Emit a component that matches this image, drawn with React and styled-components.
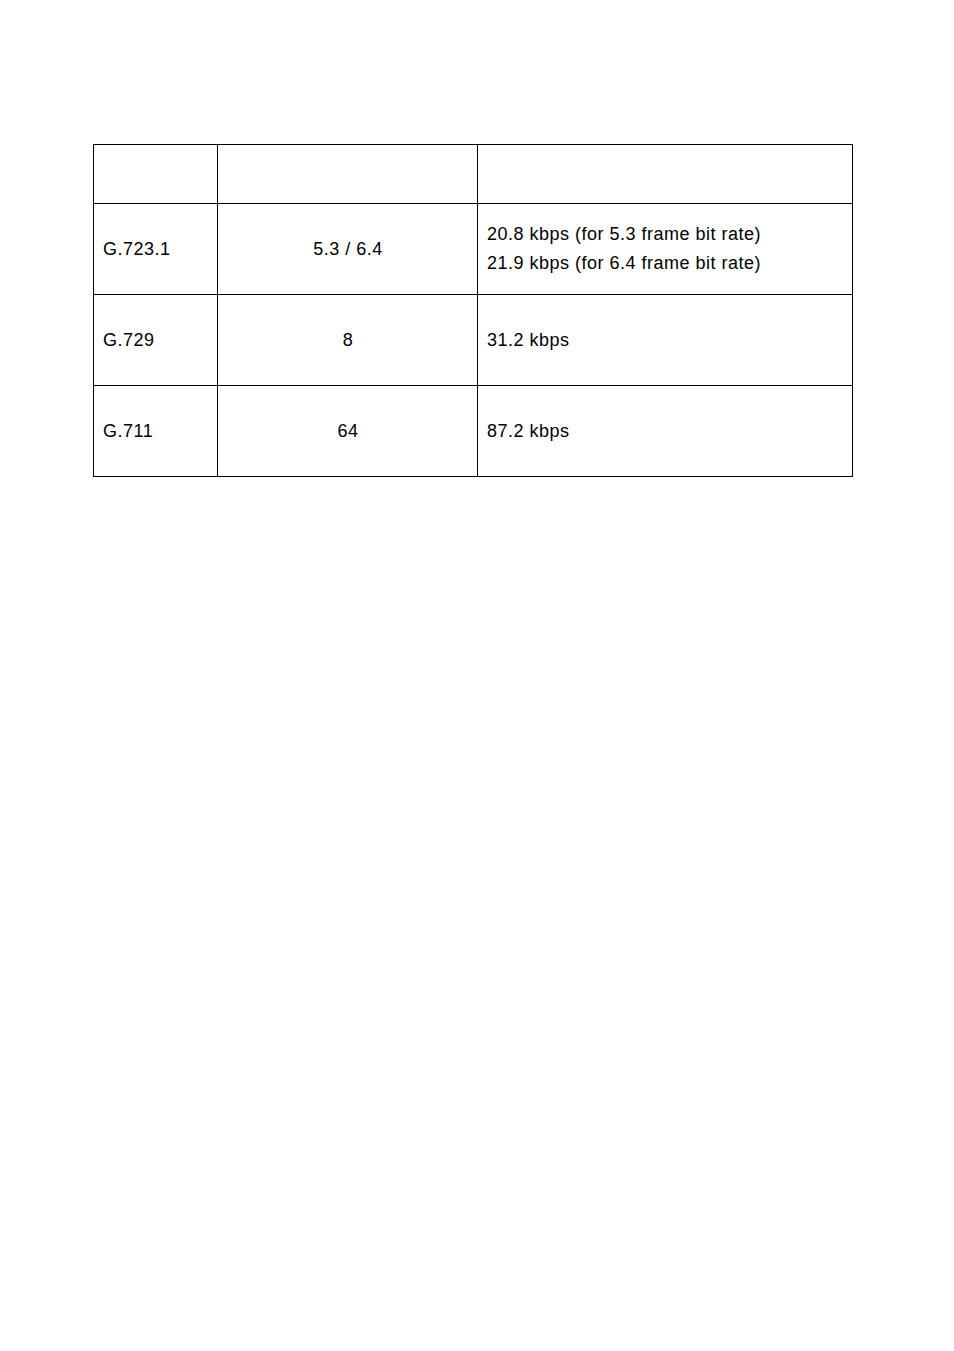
import React from 'react';
import styled, { createGlobalStyle } from 'styled-components';

const GlobalStyle = createGlobalStyle`
  body {
    margin: 0;
    background: #fff;
    font-family: 'Liberation Sans', Arial, sans-serif;
    color: #000;
  }
`;

const Page = styled.div`
  width: 954px;
  min-height: 1351px;
  padding: 144px 0 0 93px;
  box-sizing: border-box;
`;

const Table = styled.table`
  border-collapse: collapse;
  table-layout: fixed;
  width: 759px;
`;

const Row = styled.tr`
  height: ${(p) => (p.$header ? '59px' : '91px')};
`;

const Cell = styled.td`
  border: 1px solid #000;
  padding: 0 8px 0 9px;
  font-size: 18px;
  letter-spacing: 0.5px;
  line-height: 29px;
  vertical-align: middle;
  text-align: ${(p) => (p.$center ? 'center' : 'left')};
  box-sizing: border-box;
`;

const rows = [
  { codec: 'G.723.1', rate: '5.3 / 6.4', bw: ['20.8 kbps (for 5.3 frame bit rate)', '21.9 kbps (for 6.4 frame bit rate)'] },
  { codec: 'G.729', rate: '8', bw: ['31.2 kbps'] },
  { codec: 'G.711', rate: '64', bw: ['87.2 kbps'] },
];

export default function App() {
  return (
    <>
      <GlobalStyle />
      <Page>
        <Table>
          <colgroup>
            <col style={{ width: 124 }} />
            <col style={{ width: 260 }} />
            <col style={{ width: 375 }} />
          </colgroup>
          <tbody>
            <Row $header>
              <Cell />
              <Cell />
              <Cell />
            </Row>
            {rows.map((r) => (
              <Row key={r.codec}>
                <Cell>{r.codec}</Cell>
                <Cell $center>{r.rate}</Cell>
                <Cell>
                  {r.bw.map((line) => (
                    <div key={line}>{line}</div>
                  ))}
                </Cell>
              </Row>
            ))}
          </tbody>
        </Table>
      </Page>
    </>
  );
}
